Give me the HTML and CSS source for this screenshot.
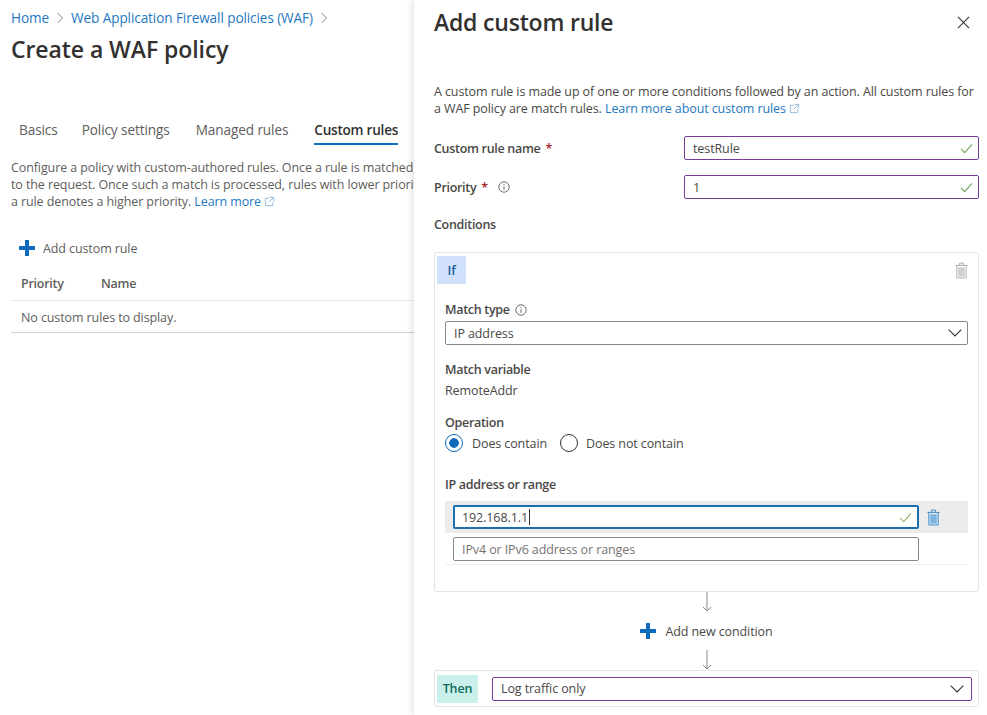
FILE: index.html
```html
<!DOCTYPE html>
<html lang="en">
<head>
<meta charset="utf-8">
<title>Add custom rule</title>
<link rel="stylesheet" href="styles.css">
</head>
<body>
<main class="page">
  <section class="blade">
    <nav class="crumbs">
      <a class="link">Home</a>
      <svg class="crumb-sep" viewBox="0 0 8 12"><path d="M1.5 1l5 5-5 5"/></svg>
      <a class="link">Web Application Firewall policies (WAF)</a>
      <svg class="crumb-sep" viewBox="0 0 8 12"><path d="M1.5 1l5 5-5 5"/></svg>
    </nav>
    <h1 class="page-title">Create a WAF policy</h1>
    <div class="tabs">
      <span class="tab">Basics</span>
      <span class="tab">Policy settings</span>
      <span class="tab">Managed rules</span>
      <span class="tab tab-active">Custom rules</span>
    </div>
    <p class="intro">Configure a policy with custom-authored rules. Once a rule is matched, the corresponding action defined in the rule is applied<br>to the request. Once such a match is processed, rules with lower priorities are not processed further. A smaller integer value for<br>a rule denotes a higher priority. <a class="link">Learn more</a> <svg class="ext" viewBox="0 0 12 12"><path d="M5 2.5H1.5v8h8V7M6 1.5h4.5V6M10.5 1.5L5 7"/></svg></p>
    <div class="command">
      <svg class="plus" viewBox="0 0 16 16"><path d="M6 0h4v6h6v4h-6v6H6v-6H0V6h6z"/></svg>
      <span>Add custom rule</span>
    </div>
    <div class="table-head"><span class="col-priority">Priority</span><span>Name</span></div>
    <div class="table-empty">No custom rules to display.</div>
  </section>

  <aside class="panel">
    <header class="panel-head">
      <h2 class="panel-title">Add custom rule</h2>
      <svg class="close" viewBox="0 0 14 14"><path d="M1 1l12 12M13 1L1 13"/></svg>
    </header>
    <p class="panel-desc">A custom rule is made up of one or more conditions followed by an action. All custom rules for a WAF policy are match rules. <a class="link">Learn more about custom rules</a> <svg class="ext" viewBox="0 0 12 12"><path d="M5 2.5H1.5v8h8V7M6 1.5h4.5V6M10.5 1.5L5 7"/></svg></p>

    <div class="form-row">
      <label class="form-label">Custom rule name<span class="req">*</span></label>
      <div class="field field-valid"><span>testRule</span><svg class="check" viewBox="0 0 14 12"><path d="M1 6.5l4 4L13 1.5"/></svg></div>
    </div>
    <div class="form-row form-row-second">
      <label class="form-label">Priority<span class="req">*</span><svg class="info" viewBox="0 0 12 12"><circle cx="6" cy="6" r="5.2"/><path d="M6 5.2v3.6M6 3v1.2"/></svg></label>
      <div class="field field-valid"><span>1</span><svg class="check" viewBox="0 0 14 12"><path d="M1 6.5l4 4L13 1.5"/></svg></div>
    </div>
    <div class="section-label">Conditions</div>

    <div class="card card-if">
      <div class="card-top">
        <span class="badge badge-if">If</span>
        <svg class="trash trash-off" viewBox="0 0 14 18"><path class="trash-fill" d="M3.5 5.5h7v10h-7z"/><path d="M.5 3.5h13M5 3.5V1h4v2.5M2 3.5V17h10V3.5"/></svg>
      </div>
      <div class="card-body">
        <div class="field-label">Match type<svg class="info" viewBox="0 0 12 12"><circle cx="6" cy="6" r="5.2"/><path d="M6 5.2v3.6M6 3v1.2"/></svg></div>
        <div class="field field-plain"><span>IP address</span><svg class="chev" viewBox="0 0 14 8"><path d="M.7.7L7 7l6.3-6.3"/></svg></div>
        <div class="field-label label-variable">Match variable</div>
        <div class="static">RemoteAddr</div>
        <div class="field-label label-operation">Operation</div>
        <div class="radios">
          <span class="radio radio-on"></span><span class="radio-text">Does contain</span>
          <span class="radio"></span><span class="radio-text">Does not contain</span>
        </div>
        <div class="field-label label-ip">IP address or range</div>
        <div class="ip-active">
          <div class="field field-focus"><span>192.168.1.1</span><i class="caret"></i><svg class="check check-dim" viewBox="0 0 14 12"><path d="M1 6.5l4 4L13 1.5"/></svg></div>
          <svg class="trash trash-on" viewBox="0 0 14 18"><path class="trash-fill" d="M3.5 5.5h7v10h-7z"/><path d="M.5 3.5h13M5 3.5V1h4v2.5M2 3.5V17h10V3.5"/></svg>
        </div>
        <div class="ip-next">
          <div class="field field-plain field-empty"><span>IPv4 or IPv6 address or ranges</span></div>
        </div>
      </div>
    </div>

    <div class="flow">
      <svg class="arrow" viewBox="0 0 10 20"><path d="M5 0v19M1 15l4 4 4-4"/></svg>
      <div class="add-condition">
        <svg class="plus" viewBox="0 0 16 16"><path d="M6 0h4v6h6v4h-6v6H6v-6H0V6h6z"/></svg>
        <span>Add new condition</span>
      </div>
      <svg class="arrow" viewBox="0 0 10 20"><path d="M5 0v19M1 15l4 4 4-4"/></svg>
    </div>

    <div class="card card-then">
      <span class="badge badge-then">Then</span>
      <div class="field field-valid field-then"><span>Log traffic only</span><svg class="chev" viewBox="0 0 14 8"><path d="M.7.7L7 7l6.3-6.3"/></svg></div>
    </div>
  </aside>
</main>
</body>
</html>
```

FILE: styles.css
```css
* { box-sizing: border-box; }
html, body { margin: 0; height: 715px; overflow: hidden; }
body {
  background: #fff;
  color: #323130;
  font-family: "Open Sans", "Noto Sans", sans-serif;
  font-size: 12.5px;
  line-height: 17px;
  letter-spacing: -0.1px;
}
svg { display: block; flex: none; fill: none; stroke: currentColor; }
.link { color: #1f78c1; }

.page { display: flex; height: 715px; overflow: hidden; }

/* Left blade */
.blade { width: 414px; flex: none; overflow: hidden; padding: 9px 0 0 11px; white-space: nowrap; }
.crumbs { display: flex; align-items: center; gap: 7px; height: 17px; font-size: 13.6px; }
.crumb-sep { width: 8px; height: 12px; color: #8a8886; stroke-width: 1; }
.page-title { margin: 7px 0 0; font-size: 23px; line-height: 32px; font-weight: 600; letter-spacing: -0.07px; color: #323130; }

.tabs { display: flex; gap: 26px; margin: 54px 0 0 8px; height: 32px; font-size: 13.6px; }
.tab { color: #605e5c; height: 30px; padding-top: 2px; }
.tab:first-child { margin-right: -2px; }
.tab-active { color: #323130; font-weight: 600; letter-spacing: -0.25px; border-bottom: 2px solid #0f6cbd; height: 26px; }
.intro { margin: 8px 0 0; width: 560px; line-height: 17px; color: #605e5c; }
.intro .ext { display: inline-block; vertical-align: -1px; }
.ext { width: 11px; height: 11px; color: #8fb8dc; stroke-width: 1; }

.command { display: flex; align-items: center; gap: 8px; margin: 28px 0 0 8px; height: 20px; color: #605e5c; }
.plus { width: 16px; height: 16px; fill: #0f6cbd; stroke: none; }
.table-head { display: flex; height: 37px; margin-top: 6px; padding: 11px 0 0 10px; border-bottom: 1px solid #e8e8e8; font-weight: 600; letter-spacing: -0.25px; color: #605e5c; }
.col-priority { width: 80px; }
.table-empty { height: 32px; padding: 8px 0 0 10px; border-bottom: 1px solid #d4d4d4; color: #605e5c; }

/* Right panel */
.panel {
  flex: none;
  width: 573px;
  height: 715px;
  overflow: hidden;
  padding: 0 8px 0 20px;
  background: #fff;
  box-shadow: -3px 0 6px rgba(0, 0, 0, .09);
  position: relative;
}
.panel-head { display: flex; align-items: center; justify-content: space-between; height: 44px; }
.panel-title { margin: -1px 0 0; font-size: 23px; line-height: 44px; font-weight: 600; letter-spacing: -0.2px; color: #323130; }
.close { width: 13px; height: 13px; margin-right: 9px; color: #323130; stroke-width: 1.1; }
.panel-desc { margin: 39px 0 0; line-height: 17px; color: #4a4846; }
.panel-desc .ext { display: inline-block; vertical-align: -1px; }

.form-row { display: flex; align-items: center; margin-top: 19px; height: 24px; }
.form-row-second { margin-top: 15px; }
.form-label { display: flex; align-items: center; gap: 5px; width: 250px; flex: none; font-weight: 600; letter-spacing: -0.3px; color: #4a4846; white-space: pre; }
.req { color: #a4262c; }
.info { width: 12px; height: 12px; color: #605e5c; stroke-width: .9; margin-left: 5px; }

.field { display: flex; align-items: center; justify-content: space-between; flex: 1; height: 24px; padding: 0 5px 0 8px; border: 1px solid #8a8886; border-radius: 2px; background: #fff; color: #4a4846; }
.field-valid { border-color: #773c98; border-width: 1.5px; }
.check { width: 13px; height: 11px; color: #6fa558; stroke-width: 1.2; }
.check-dim { color: #98b56e; margin-left: auto; }
.chev { width: 14px; height: 8px; color: #323130; stroke-width: 1.1; }

.section-label { margin-top: 17px; height: 17px; font-weight: 600; letter-spacing: -0.3px; color: #4a4846; }

.card { border: 1px solid #e3e3e3; border-radius: 3px; }
.card-if { height: 340px; margin-top: 19px; padding: 3px 10px 0 2px; }
.card-top { display: flex; align-items: flex-start; justify-content: space-between; height: 28px; }
.badge { display: flex; align-items: center; justify-content: center; height: 28px; font-weight: 600; border-radius: 1px; }
.badge-if { width: 29px; background: #d2e1fb; color: #1a5c9c; }
.badge-then { width: 41px; flex: none; background: #c9f0ea; color: #0f6b5c; }
.trash { width: 13px; height: 17px; stroke-width: 1; }
.trash-off { margin: 6px 0 0; color: #a8a8a8; }
.trash-off .trash-fill { fill: #cfcfcf; stroke: none; }
.trash-on { color: #2d86c9; margin-left: 8px; }
.trash-on .trash-fill { fill: #7db4e0; stroke: none; }

.card-body { padding-left: 8px; }
.field-label { display: flex; align-items: center; font-weight: 600; letter-spacing: -0.3px; color: #4a4846; height: 17px; }
.card-body > .field-label:first-child { margin-top: 17px; }
.card-body > .field { margin-top: 3px; }
.label-variable { margin-top: 16px; }
.static { margin-top: 4px; height: 17px; color: #4a4846; }
.label-operation { margin-top: 15px; }
.radios { display: flex; align-items: center; height: 20px; margin-top: 2px; color: #4a4846; }
.radio { width: 18px; height: 18px; border: 1px solid #323130; border-radius: 50%; flex: none; margin-right: 9px; }
.radio-on { border-color: #0f6cbd; background: radial-gradient(circle, #0f6cbd 0 4.5px, #fff 5px); }
.radio-text { margin-right: 13px; }
.radio-text + .radio { margin-right: 8px; }
.label-ip { margin-top: 23px; }
.ip-active { display: flex; align-items: center; height: 32px; margin-top: 8px; padding-left: 8px; background: #ececec; }
.ip-active .field { flex: none; width: 466px; }
.field-focus { border: 2px solid #1b6fae; height: 24px; justify-content: flex-start; padding-left: 7px; }
.caret { width: 1px; height: 16px; background: #323130; margin-left: 1px; }
.ip-next { height: 32px; padding: 4px 0 0 8px; border-bottom: 1px solid #f0f0f0; }
.field-empty { width: 466px; flex: none; }
.field-empty span { color: #767472; }

.flow { display: flex; flex-direction: column; align-items: center; height: 78px; }
.arrow { width: 10px; height: 20px; color: #8a8886; stroke-width: 1; }
.add-condition { display: flex; align-items: center; gap: 9px; height: 39px; color: #4a4846; }

.card-then { display: flex; align-items: center; gap: 14px; height: 37px; padding: 0 6px 0 2px; }
.field-then { padding-right: 7px; }
```
